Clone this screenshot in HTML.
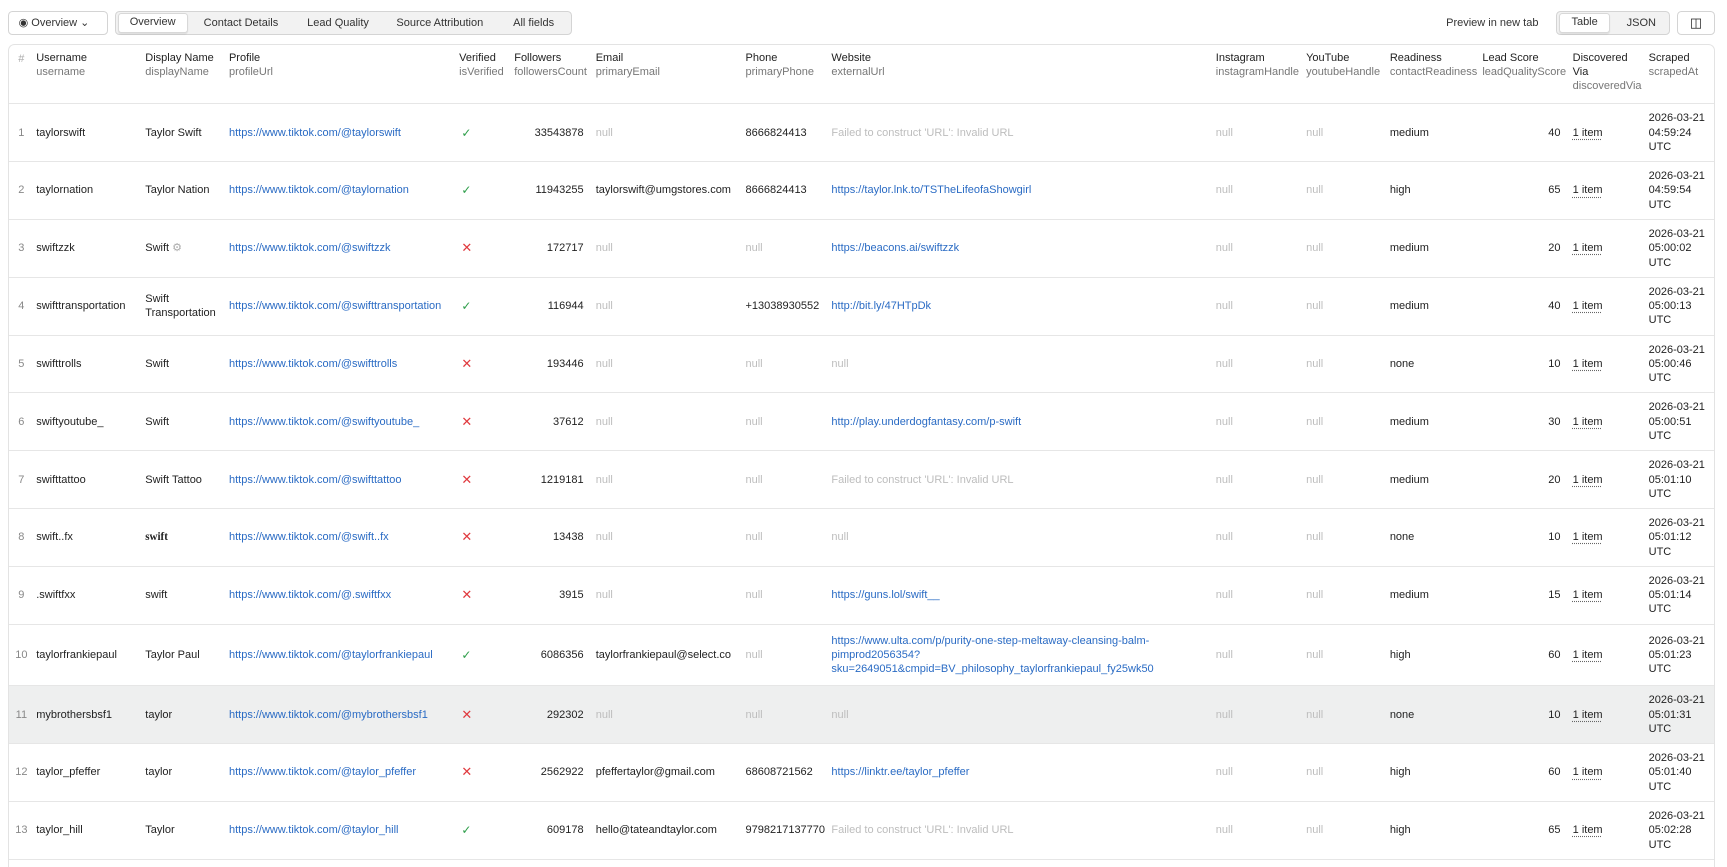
<!DOCTYPE html>
<html><head><meta charset="utf-8"><style>
html,body{margin:0;padding:0;background:#fff;overflow:hidden}
body{width:1568px;height:787px;zoom:1.10140;font-family:"Liberation Sans",sans-serif;font-size:10px;color:#222;position:relative;overflow:hidden}
.btn{position:absolute;border:1px solid #d4d4d4;border-radius:4px;background:#fff;box-sizing:border-box}
.tabs{position:absolute;left:104px;top:10px;width:415px;height:22px;background:#f2f2f2;border:1px solid #d4d4d4;border-radius:4px;box-sizing:border-box}
.tab{position:absolute;top:3px;height:16px;line-height:16px;font-size:10px;color:#333}
.tab.on{background:#fff;border:1px solid #d8d8d8;border-radius:3px;box-shadow:0 1px 1px rgba(0,0,0,.08);padding:0 10px;top:1px}
.wrap{position:absolute;left:7px;top:40px;width:1550px;height:747px;border:1px solid #e3e3e3;border-bottom:none;border-radius:6px 6px 0 0;overflow:hidden;box-sizing:border-box}
table{border-collapse:collapse;table-layout:fixed;width:1550px;position:absolute;left:-1px;top:-1px}
td,th{padding:0 5px;vertical-align:middle;overflow:hidden;white-space:nowrap;line-height:13px;font-weight:normal;text-align:left}
th{vertical-align:top;padding-top:6px;height:47px;color:#222}
th span{display:block;color:#777}
tr{border-bottom:1px solid #e6e6e6}
tbody tr{height:52.5px}
.n{color:#888;text-align:center;padding:0 0 0 4px}
.l{color:#2a6bc4}
.nu{color:#bdbdbd}
.r{text-align:right;padding-right:6px}
.w{white-space:normal}
.it{text-decoration:underline dotted #666;text-underline-offset:3px}
.ok{color:#2e9e4a;font-size:11px;padding-left:7px}
.x{color:#e0393e;font-size:12px;padding-left:7px}
.hl{background:#eeefef}
</style></head><body>
<div class="btn" style="left:7px;top:10px;width:91px;height:22px;line-height:20px;padding-left:9px;color:#333">&#9673; Overview &#8964;</div>
<div class="tabs">
<div class="tab on" style="left:2px">Overview</div>
<div class="tab" style="left:80px">Contact Details</div>
<div class="tab" style="left:174px">Lead Quality</div>
<div class="tab" style="left:255px">Source Attribution</div>
<div class="tab" style="left:361px">All fields</div>
</div>
<div style="position:absolute;left:1313px;top:15px;color:#333">Preview in new tab</div>
<div class="tabs" style="left:1413px;width:103px">
<div class="tab on" style="left:2px">Table</div>
<div class="tab" style="left:63px">JSON</div>
</div>
<div class="btn" style="left:1523px;top:10px;width:34px;height:22px;text-align:center;line-height:20px;font-size:12px">&#9707;</div>
<div class="wrap"><table>
<colgroup><col style="width:21px"><col style="width:99px"><col style="width:76px"><col style="width:209px"><col style="width:50px"><col style="width:74px"><col style="width:136px"><col style="width:78px"><col style="width:349px"><col style="width:82px"><col style="width:76px"><col style="width:84px"><col style="width:82px"><col style="width:69px"><col style="width:65px"></colgroup>
<thead><tr><th class="n" style="color:#aaa;padding-top:7px">#</th><th>Username<span>username</span></th><th>Display Name<span>displayName</span></th><th>Profile<span>profileUrl</span></th><th>Verified<span>isVerified</span></th><th>Followers<span>followersCount</span></th><th>Email<span>primaryEmail</span></th><th>Phone<span>primaryPhone</span></th><th>Website<span>externalUrl</span></th><th>Instagram<span>instagramHandle</span></th><th>YouTube<span>youtubeHandle</span></th><th>Readiness<span>contactReadiness</span></th><th>Lead Score<span>leadQualityScore</span></th><th class="w">Discovered Via<span>discoveredVia</span></th><th>Scraped<span>scrapedAt</span></th></tr></thead>
<tbody>
<tr><td class="n">1</td><td>taylorswift</td><td>Taylor Swift</td><td class="l">https://www.tiktok.com/@taylorswift</td><td class="ok">&#10003;</td><td class="r">33543878</td><td class="nu">null</td><td>8666824413</td><td class="nu">Failed to construct 'URL': Invalid URL</td><td class="nu">null</td><td class="nu">null</td><td>medium</td><td class="r">40</td><td><span class="it">1 item</span></td><td class="w">2026-03-21 04:59:24 UTC</td></tr>
<tr><td class="n">2</td><td>taylornation</td><td>Taylor Nation</td><td class="l">https://www.tiktok.com/@taylornation</td><td class="ok">&#10003;</td><td class="r">11943255</td><td>taylorswift@umgstores.com</td><td>8666824413</td><td class="l">https://taylor.lnk.to/TSTheLifeofaShowgirl</td><td class="nu">null</td><td class="nu">null</td><td>high</td><td class="r">65</td><td><span class="it">1 item</span></td><td class="w">2026-03-21 04:59:54 UTC</td></tr>
<tr><td class="n">3</td><td>swiftzzk</td><td>Swift <span style="color:#aaa">&#9881;</span></td><td class="l">https://www.tiktok.com/@swiftzzk</td><td class="x">&#10005;</td><td class="r">172717</td><td class="nu">null</td><td class="nu">null</td><td class="l">https://beacons.ai/swiftzzk</td><td class="nu">null</td><td class="nu">null</td><td>medium</td><td class="r">20</td><td><span class="it">1 item</span></td><td class="w">2026-03-21 05:00:02 UTC</td></tr>
<tr><td class="n">4</td><td>swifttransportation</td><td class="w">Swift Transportation</td><td class="l">https://www.tiktok.com/@swifttransportation</td><td class="ok">&#10003;</td><td class="r">116944</td><td class="nu">null</td><td>+13038930552</td><td class="l">http://bit.ly/47HTpDk</td><td class="nu">null</td><td class="nu">null</td><td>medium</td><td class="r">40</td><td><span class="it">1 item</span></td><td class="w">2026-03-21 05:00:13 UTC</td></tr>
<tr><td class="n">5</td><td>swifttrolls</td><td>Swift</td><td class="l">https://www.tiktok.com/@swifttrolls</td><td class="x">&#10005;</td><td class="r">193446</td><td class="nu">null</td><td class="nu">null</td><td class="nu">null</td><td class="nu">null</td><td class="nu">null</td><td>none</td><td class="r">10</td><td><span class="it">1 item</span></td><td class="w">2026-03-21 05:00:46 UTC</td></tr>
<tr><td class="n">6</td><td>swiftyoutube_</td><td>Swift</td><td class="l">https://www.tiktok.com/@swiftyoutube_</td><td class="x">&#10005;</td><td class="r">37612</td><td class="nu">null</td><td class="nu">null</td><td class="l">http://play.underdogfantasy.com/p-swift</td><td class="nu">null</td><td class="nu">null</td><td>medium</td><td class="r">30</td><td><span class="it">1 item</span></td><td class="w">2026-03-21 05:00:51 UTC</td></tr>
<tr><td class="n">7</td><td>swifttattoo</td><td>Swift Tattoo</td><td class="l">https://www.tiktok.com/@swifttattoo</td><td class="x">&#10005;</td><td class="r">1219181</td><td class="nu">null</td><td class="nu">null</td><td class="nu">Failed to construct 'URL': Invalid URL</td><td class="nu">null</td><td class="nu">null</td><td>medium</td><td class="r">20</td><td><span class="it">1 item</span></td><td class="w">2026-03-21 05:01:10 UTC</td></tr>
<tr><td class="n">8</td><td>swift..fx</td><td style="font-family:'Liberation Serif',serif;font-weight:bold">swift</td><td class="l">https://www.tiktok.com/@swift..fx</td><td class="x">&#10005;</td><td class="r">13438</td><td class="nu">null</td><td class="nu">null</td><td class="nu">null</td><td class="nu">null</td><td class="nu">null</td><td>none</td><td class="r">10</td><td><span class="it">1 item</span></td><td class="w">2026-03-21 05:01:12 UTC</td></tr>
<tr><td class="n">9</td><td>.swiftfxx</td><td>swift</td><td class="l">https://www.tiktok.com/@.swiftfxx</td><td class="x">&#10005;</td><td class="r">3915</td><td class="nu">null</td><td class="nu">null</td><td class="l">https://guns.lol/swift__</td><td class="nu">null</td><td class="nu">null</td><td>medium</td><td class="r">15</td><td><span class="it">1 item</span></td><td class="w">2026-03-21 05:01:14 UTC</td></tr>
<tr style="height:56px"><td class="n">10</td><td>taylorfrankiepaul</td><td>Taylor Paul</td><td class="l">https://www.tiktok.com/@taylorfrankiepaul</td><td class="ok">&#10003;</td><td class="r">6086356</td><td>taylorfrankiepaul@select.co</td><td class="nu">null</td><td class="l">https://www.ulta.com/p/purity-one-step-meltaway-cleansing-balm-<br>pimprod2056354?<br>sku=2649051&amp;cmpid=BV_philosophy_taylorfrankiepaul_fy25wk50</td><td class="nu">null</td><td class="nu">null</td><td>high</td><td class="r">60</td><td><span class="it">1 item</span></td><td class="w">2026-03-21 05:01:23 UTC</td></tr>
<tr class="hl"><td class="n">11</td><td>mybrothersbsf1</td><td>taylor</td><td class="l">https://www.tiktok.com/@mybrothersbsf1</td><td class="x">&#10005;</td><td class="r">292302</td><td class="nu">null</td><td class="nu">null</td><td class="nu">null</td><td class="nu">null</td><td class="nu">null</td><td>none</td><td class="r">10</td><td><span class="it">1 item</span></td><td class="w">2026-03-21 05:01:31 UTC</td></tr>
<tr><td class="n">12</td><td>taylor_pfeffer</td><td>taylor</td><td class="l">https://www.tiktok.com/@taylor_pfeffer</td><td class="x">&#10005;</td><td class="r">2562922</td><td>pfeffertaylor@gmail.com</td><td>68608721562</td><td class="l">https://linktr.ee/taylor_pfeffer</td><td class="nu">null</td><td class="nu">null</td><td>high</td><td class="r">60</td><td><span class="it">1 item</span></td><td class="w">2026-03-21 05:01:40 UTC</td></tr>
<tr><td class="n">13</td><td>taylor_hill</td><td>Taylor</td><td class="l">https://www.tiktok.com/@taylor_hill</td><td class="ok">&#10003;</td><td class="r">609178</td><td>hello@tateandtaylor.com</td><td>9798217137770</td><td class="nu">Failed to construct 'URL': Invalid URL</td><td class="nu">null</td><td class="nu">null</td><td>high</td><td class="r">65</td><td><span class="it">1 item</span></td><td class="w">2026-03-21 05:02:28 UTC</td></tr>
</tbody></table></div>
</body></html>
